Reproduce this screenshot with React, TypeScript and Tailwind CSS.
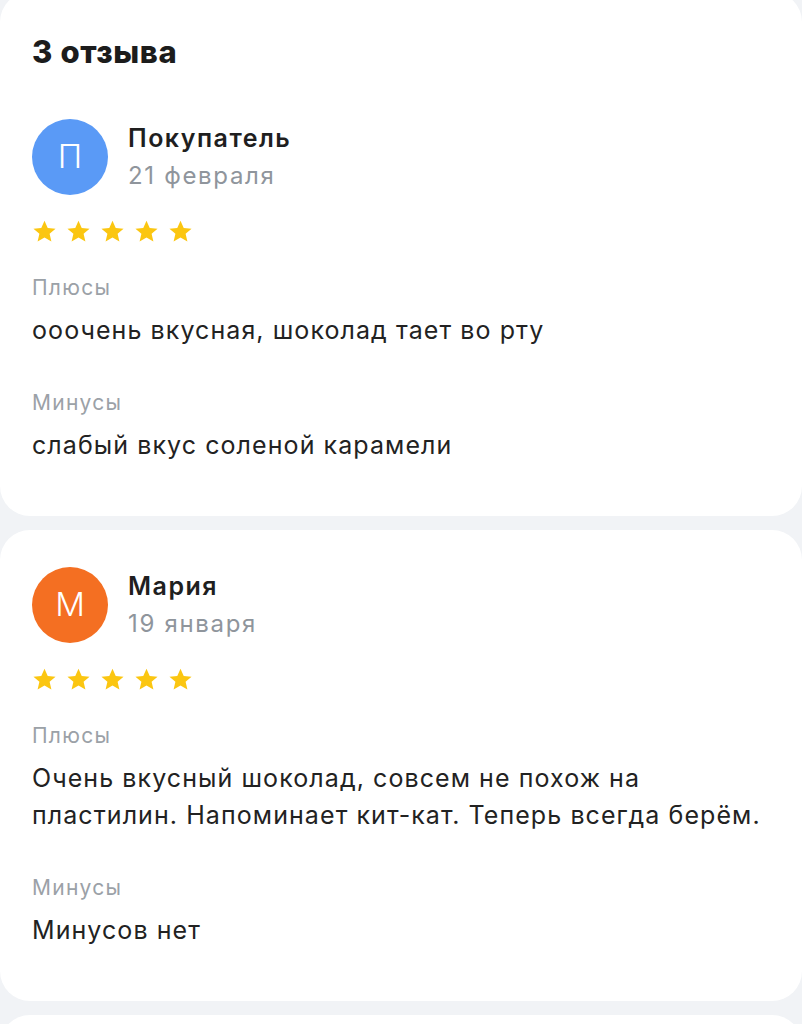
import React from "react";

function Star() {
  return (
    <svg width="25" height="25" viewBox="0 0 24 24" aria-hidden="true">
      <path
        d="M12 1.6l3.1 6.95 7.5.7-5.7 5 1.72 7.4L12 17.8l-6.62 3.85 1.72-7.4-5.7-5 7.5-.7z"
        fill="#FBC611"
      />
    </svg>
  );
}

function Stars() {
  return (
    <div className="flex gap-[9px]">
      <Star />
      <Star />
      <Star />
      <Star />
      <Star />
    </div>
  );
}

type Review = {
  initial: string;
  color: string;
  name: string;
  date: string;
  plus: string;
  minus: string;
};

function ReviewBody({ r }: { r: Review }) {
  return (
    <>
      <div className="flex items-center gap-[20px]">
        <div
          className={`w-[76px] h-[76px] shrink-0 rounded-full flex items-center justify-center text-white text-[33px] font-light ${r.color}`}
        >
          {r.initial}
        </div>
        <div className="flex flex-col">
          <div className="text-[25px] leading-[30px] font-semibold tracking-[0.06em] text-[#1f1f1f]">{r.name}</div>
          <div className="text-[24px] leading-[30px] mt-[8px] tracking-[0.07em] text-[#8f959c]">{r.date}</div>
        </div>
      </div>
      <div className="mt-[24px]">
        <Stars />
      </div>
      <div className="mt-[30px] text-[21px] leading-[28px] tracking-[0.06em] text-[#9ba1a7]">Плюсы</div>
      <div className="mt-[10px] text-[25px] leading-[37px] tracking-[0.043em] text-[#222222]">{r.plus}</div>
      <div className="mt-[40px] text-[21px] leading-[28px] tracking-[0.06em] text-[#9ba1a7]">Минусы</div>
      <div className="mt-[10px] text-[25px] leading-[37px] tracking-[0.043em] text-[#222222]">{r.minus}</div>
    </>
  );
}

export default function App() {
  const reviews: Review[] = [
    {
      initial: "П",
      color: "bg-[#5A9AF6]",
      name: "Покупатель",
      date: "21 февраля",
      plus: "ооочень вкусная, шоколад тает во рту",
      minus: "слабый вкус соленой карамели",
    },
    {
      initial: "М",
      color: "bg-[#F46F22]",
      name: "Мария",
      date: "19 января",
      plus: "Очень вкусный шоколад, совсем не похож на пластилин. Напоминает кит-кат. Теперь всегда берём.",
      minus: "Минусов нет",
    },
  ];
  return (
    <div
      className="min-h-[1024px] bg-[#F1F3F6] overflow-hidden flex flex-col gap-[14px]"
      style={{ fontFamily: "Inter, 'Noto Sans', sans-serif" }}
    >
      <div className="-mt-[8px] bg-white rounded-[30px] px-[32px] pt-[42px] pb-[52px]">
        <h1 className="text-[31px] leading-[36px] font-extrabold tracking-[0.02em] text-[#1c1c1c] mb-[49px]">3 отзыва</h1>
        <ReviewBody r={reviews[0]} />
      </div>
      <div className="bg-white rounded-[30px] px-[32px] pt-[37px] pb-[52px]">
        <ReviewBody r={reviews[1]} />
      </div>
      <div className="bg-white rounded-[30px] h-[60px]" />
    </div>
  );
}
